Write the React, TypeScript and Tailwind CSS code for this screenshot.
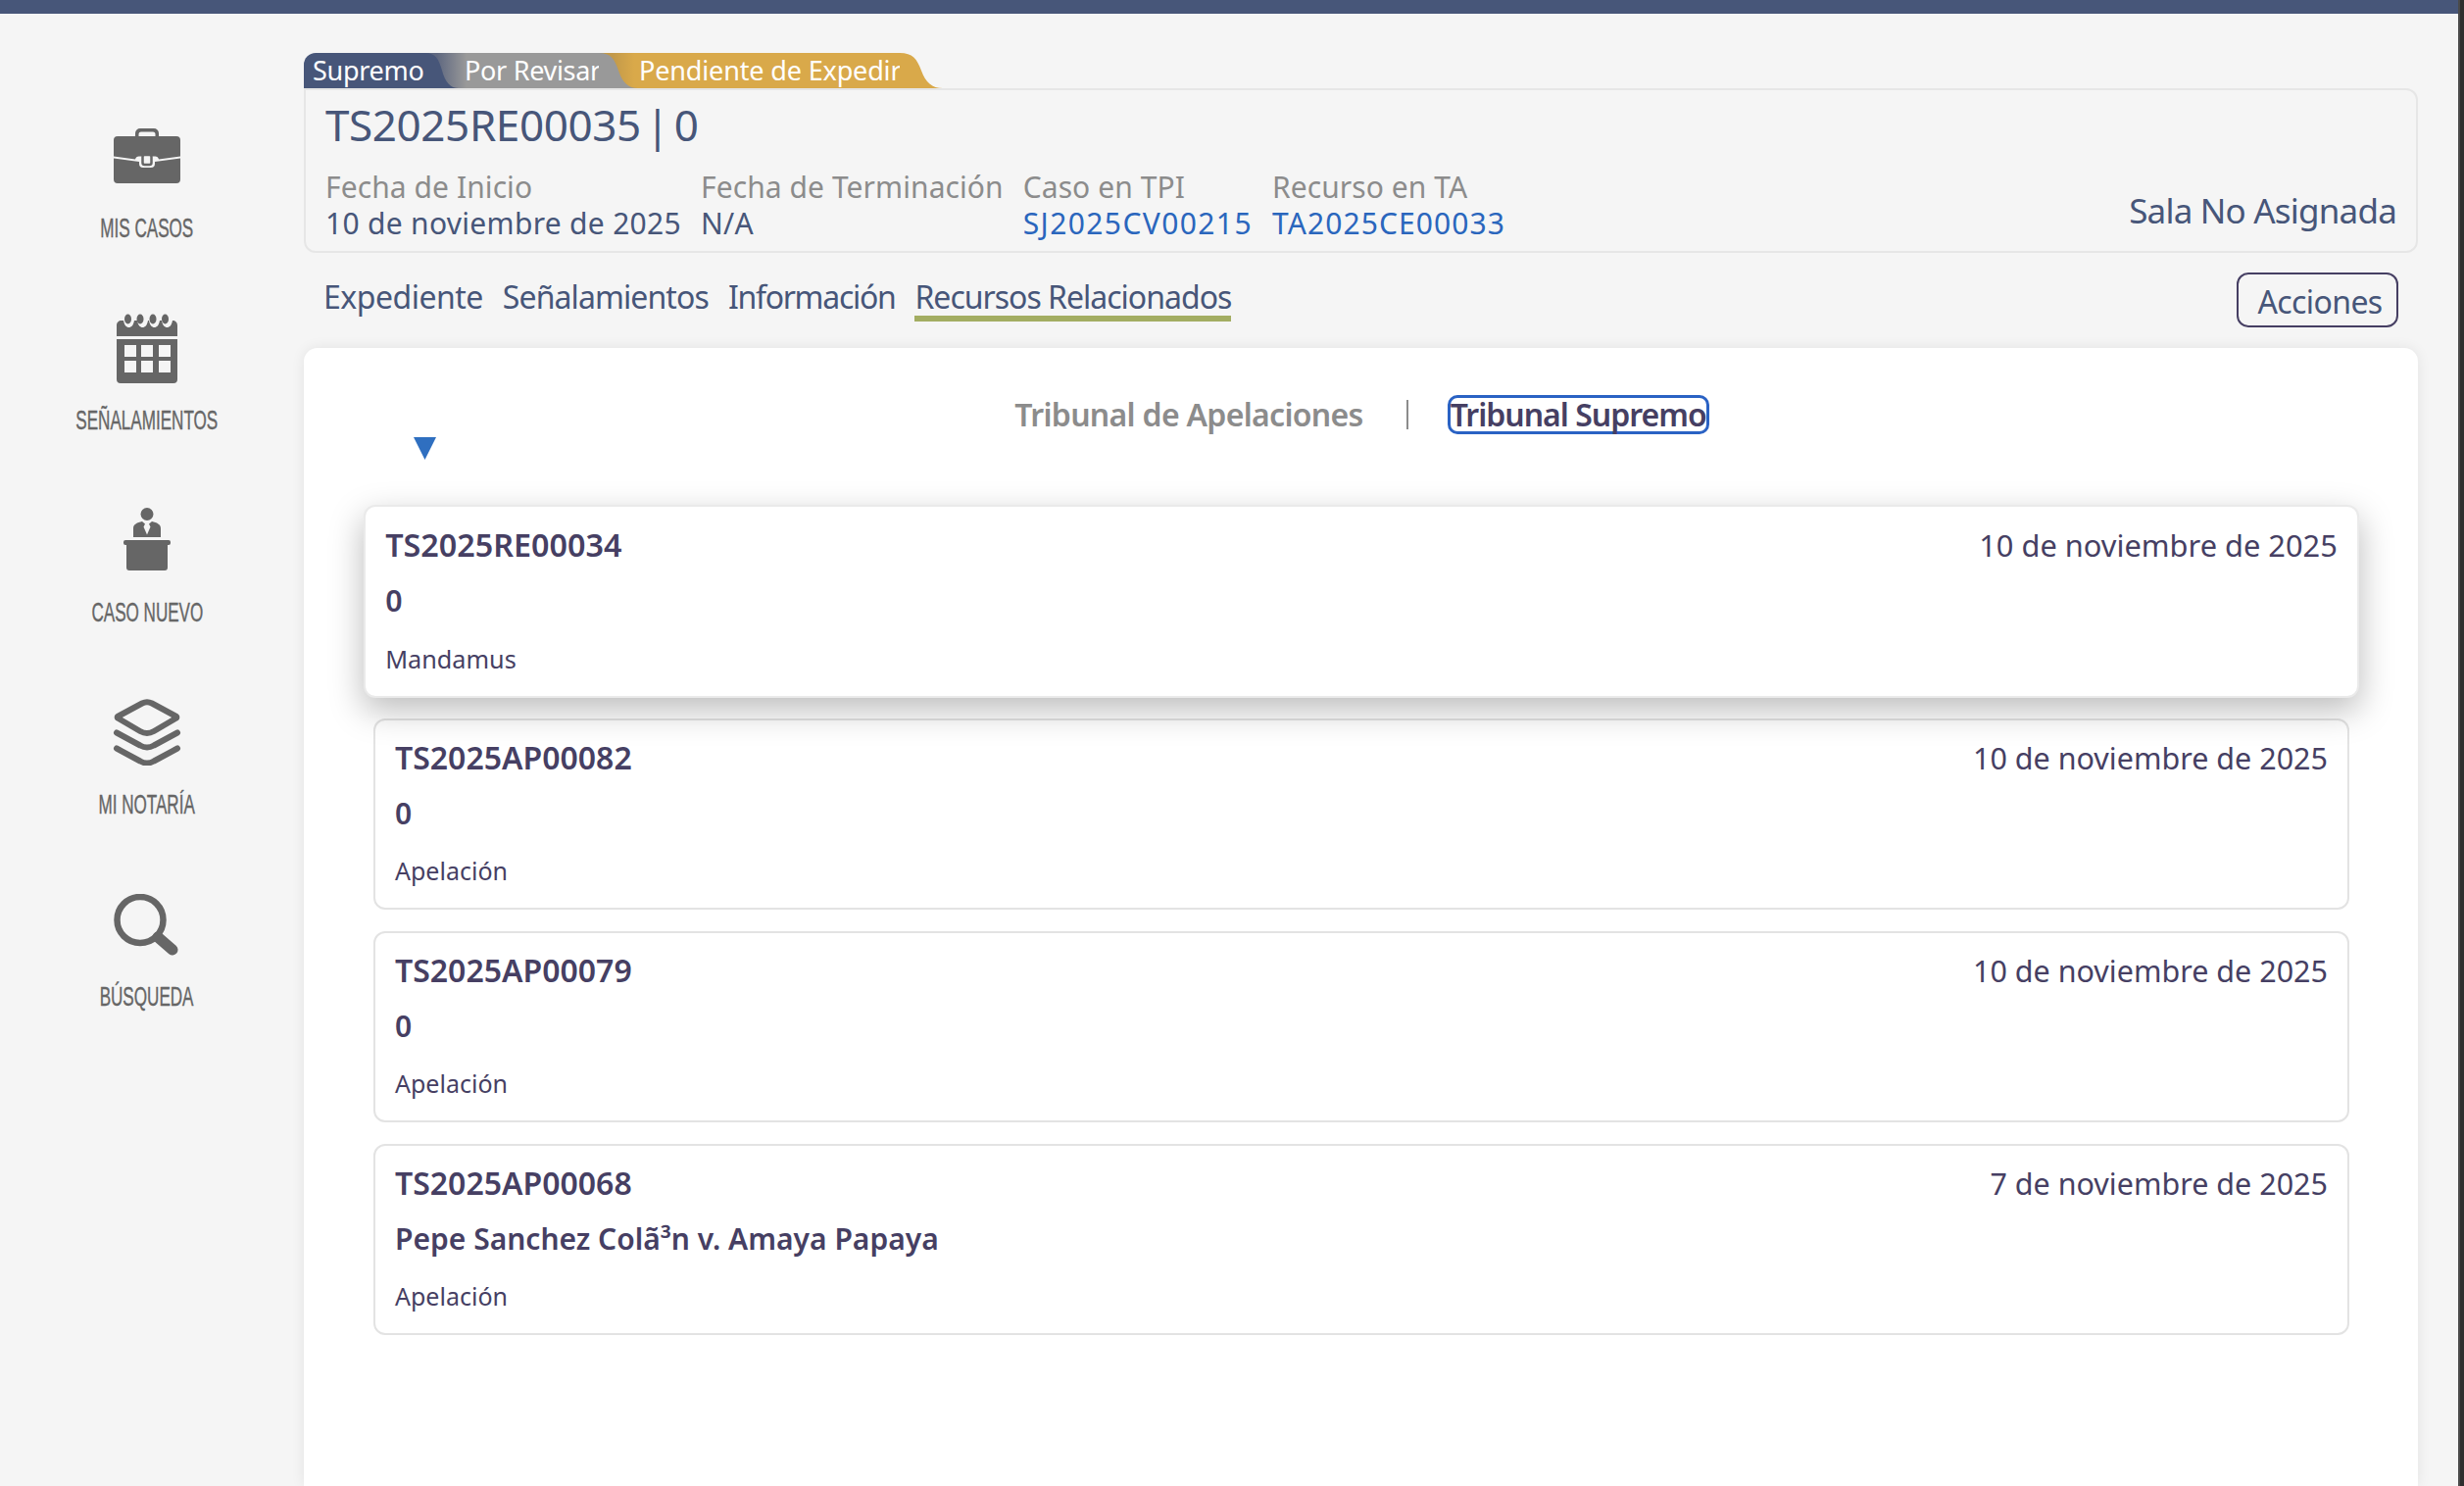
const sans = "font-['Noto_Sans',sans-serif]";

function IconBriefcase() {
  return (
    <svg className="block" width="70" height="58" viewBox="0 0 70 58" fill="#666666">
      <path d="M23 10V6a5 5 0 0 1 5-5h14a5 5 0 0 1 5 5v4h-3.500V7a2.500 2.500 0 0 0-2.500-2.500H29A2.500 2.500 0 0 0 26.500 7v3z" />
      <path d="M5 9h60a4 4 0 0 1 4 4v16.500l-22 3a4 4 0 0 0-4-3h-16a4 4 0 0 0-4 3l-22-3V13a4 4 0 0 1 4-4z" />
      <path d="M1 31.500l26 3.500v2a4 4 0 0 0 4 4h8a4 4 0 0 0 4-4v-2l26-3.500V53a4 4 0 0 1-4 4H5a4 4 0 0 1-4-4z" />
      <rect x="30.500" y="28" width="9" height="10" rx="2" fill="#f5f5f5" stroke="#666666" strokeWidth="2.500" />
    </svg>
  );
}

function IconCalendar() {
  return (
    <svg className="block" width="64" height="72" viewBox="0 0 64 72" fill="#666666">
      <path d="M1 12c0-3 2-5 5-5h2c1 5 3 7 5.500 7S18 12 19 7h3c1 5 3 7 5.500 7S32 12 33 7h1c1 5 3 7 5.500 7S44 12 45 7h2c1 5 3 7 5.500 7S57 12 58 7c3 0 5 2 5 5v11H1z" />
      <ellipse cx="12.500" cy="5.500" rx="3.500" ry="5" />
      <ellipse cx="25" cy="5.500" rx="3.500" ry="5" />
      <ellipse cx="38" cy="5.500" rx="3.500" ry="5" />
      <ellipse cx="50.500" cy="5.500" rx="3.500" ry="5" />
      <path
        fillRule="evenodd"
        d="M1 26h62v41a4 4 0 0 1-4 4H5a4 4 0 0 1-4-4zM9 32v12h12V32zM26 32v12h12V32zM44 32v12h12V32zM9 48v12h12V48zM26 48v12h12V48zM44 48v12h12V48z"
      />
    </svg>
  );
}

function IconPodium() {
  return (
    <svg className="block" width="50" height="65" viewBox="0 0 50 65" fill="#666666">
      <circle cx="25" cy="6.500" r="6.500" />
      <path d="M11 30V21c0-4 4-6 9-7l3 2.500-1.500 3 3.500 8 3.500-8-1.500-3 3-2.500c5 1 9 3 9 7v9z" />
      <rect x="1" y="33" width="48" height="5" rx="2" />
      <path d="M4 38h42v23a3 3 0 0 1-3 3H7a3 3 0 0 1-3-3z" />
    </svg>
  );
}

function IconLayers() {
  return (
    <svg className="block" width="70" height="68" viewBox="0 0 70 68" fill="none" stroke="#666666" strokeWidth="6" strokeLinecap="round" strokeLinejoin="round">
      <path d="M30 4.500a11 11 0 0 1 10 0L65 18a1 1 0 0 1 0 1.500L42 33a14 14 0 0 1-14 0L5 19.500A1 1 0 0 1 5 18z" />
      <path d="M4 34.500l24 13a14 14 0 0 0 14 0L66 34.500" />
      <path d="M4 50.500l24 13a14 14 0 0 0 14 0L66 50.500" />
    </svg>
  );
}

function IconSearch() {
  return (
    <svg className="block" width="70" height="63" viewBox="0 0 70 63" fill="none" stroke="#666666" strokeLinecap="round">
      <circle cx="28" cy="26.500" r="23.500" strokeWidth="6.500" />
      <path d="M46 44l15 13" strokeWidth="11" />
    </svg>
  );
}

function TabTail({ fill, width }: { fill: string; width: number }) {
  return (
    <svg className="block shrink-0" width={width} height="36" viewBox="0 0 40 36" preserveAspectRatio="none" fill={fill}>
      <path d="M0 0C12 0 16 6 20 18C24 30 30 36 40 36H0Z" />
    </svg>
  );
}

const navItems = [
  { label: "MIS CASOS", icon: <IconBriefcase />, box: "pt-[15px]" },
  { label: "SEÑALAMIENTOS", icon: <IconCalendar />, box: "pt-[9px]" },
  { label: "CASO NUEVO", icon: <IconPodium />, box: "pt-[11px]" },
  { label: "MI NOTARÍA", icon: <IconLayers />, box: "pt-[10px]" },
  { label: "BÚSQUEDA", icon: <IconSearch />, box: "pt-[13px]" },
];

const meta = [
  { label: "Fecha de Inicio", value: "10 de noviembre de 2025", cls: "text-[#475679] tracking-[0.3px]" },
  { label: "Fecha de Terminación", value: "N/A", cls: "text-[#475679] tracking-[0.3px]" },
  { label: "Caso en TPI", value: "SJ2025CV00215", cls: "text-[#2a66bd] tracking-[1.4px]" },
  { label: "Recurso en TA", value: "TA2025CE00033", cls: "text-[#2a66bd] tracking-[1.1px]" },
];

const tabs = [
  { label: "Expediente", cls: "tracking-[-0.5px]" },
  { label: "Señalamientos", cls: "tracking-[-0.9px]" },
  { label: "Información", cls: "tracking-[-1.3px]" },
  { label: "Recursos Relacionados", cls: "tracking-[-1px] border-b-[6px] border-[#a3ad62]" },
];

const cases = [
  { id: "TS2025RE00034", title: "0", kind: "Mandamus", date: "10 de noviembre de 2025" },
  { id: "TS2025AP00082", title: "0", kind: "Apelación", date: "10 de noviembre de 2025" },
  { id: "TS2025AP00079", title: "0", kind: "Apelación", date: "10 de noviembre de 2025" },
  { id: "TS2025AP00068", title: "Pepe Sanchez Colã³n v. Amaya Papaya", kind: "Apelación", date: "7 de noviembre de 2025" },
];

export default function App() {
  return (
    <div className={`${sans} h-[1516px] overflow-hidden flex`}>
      <div className="w-[2508px] shrink-0 bg-[#f5f5f5] flex flex-col">
        <div className="h-[14px] shrink-0 bg-[#475679]" />

        <div className="flex flex-1 min-h-0">
          {/* Sidebar */}
          <aside className="w-[310px] shrink-0 flex flex-col items-center pt-[101px] pr-[10px]">
            {navItems.map((item) => (
              <div key={item.label} className="h-[196px] flex flex-col items-center">
                <div className={`h-[102px] ${item.box}`}>{item.icon}</div>
                <span className="font-['Liberation_Sans',sans-serif] text-[28px] leading-[32px] text-[#666666] whitespace-nowrap scale-x-[0.61] [-webkit-text-stroke:0.4px_#666666]">
                  {item.label}
                </span>
              </div>
            ))}
          </aside>

          {/* Main */}
          <main className="w-[2157px] shrink-0 pt-[40px] flex flex-col">
            <div className="flex h-[36px] text-[27px] leading-[36px] text-white whitespace-nowrap">
              <div className="relative z-[3] flex">
                <div className="w-[124px] pl-[9px] rounded-tl-[12px] bg-[#475679] tracking-[-0.3px]">Supremo</div>
                <TabTail fill="#475679" width={34} />
              </div>
              <div className="relative z-[2] flex -ml-[40px]">
                <div className="w-[183px] pl-[46px] bg-[linear-gradient(90deg,#5f6880_18px,#999999_48px)] tracking-[-0.3px]">Por Revisar</div>
                <TabTail fill="#999999" width={40} />
              </div>
              <div className="relative z-[1] flex -ml-[40px]">
                <div className="w-[307px] pl-[41px] bg-[linear-gradient(90deg,#c2994a_14px,#d9a94a_36px)] tracking-[-0.15px]">Pendiente de Expedir</div>
                <TabTail fill="#d9a94a" width={44} />
              </div>
            </div>

            <div className="h-[168px] shrink-0 rounded-b-[12px] rounded-tr-[12px] border-2 border-[#e6e6e6] px-[20px] pt-[5px] flex justify-between">
              <div>
                <div className="text-[44px] leading-[60px] text-[#475679] tracking-[-0.4px] [word-spacing:-6px]">TS2025RE00035 | 0</div>
                <div className="flex gap-[20px] mt-[15px] text-[30px] leading-[37px]">
                  {meta.map((m) => (
                    <div key={m.label}>
                      <div className="text-[#8c8c8c] tracking-[0.08px]">{m.label}</div>
                      <div className={m.cls}>{m.value}</div>
                    </div>
                  ))}
                </div>
              </div>
              <div className="self-end pb-[18px] text-[35px] leading-[46px] text-[#475679] tracking-[-0.8px]">Sala No Asignada</div>
            </div>

            <div className="flex items-start justify-between mt-[20px] px-[20px]">
              <nav className="flex gap-[20px] mt-[3px] text-[32px] leading-[44px] text-[#475679]">
                {tabs.map((t) => (
                  <span key={t.label} className={`h-[47px] ${t.cls}`}>{t.label}</span>
                ))}
              </nav>
              <button className="h-[56px] w-[165px] rounded-[12px] border-2 border-[#463f63] pt-[4px] pl-[5px] text-[32px] text-[#475679] tracking-[-0.6px]">Acciones</button>
            </div>

            {/* Panel */}
            <section className="mt-[21px] flex-1 bg-white rounded-t-[14px] shadow-[0_0_14px_rgba(0,0,0,0.08)] pl-[71px] pr-[70px] text-[#463f63] relative">
              <div className="flex items-center justify-center gap-[41px] pt-[25px] pl-[1px] h-[111px] text-[32px] font-semibold tracking-[-0.7px]">
                <span className="text-[#8c8c8c]">Tribunal de Apelaciones</span>
                <span className="w-[2px] h-[30px] ml-[3px] -mr-[1px] bg-[#8c8c8c]" />
                <span className="rounded-[10px] border-[3px] border-[#2a62c4] leading-[34px] tracking-[-1px]">Tribunal Supremo</span>
              </div>
              <svg className="absolute left-[112px] top-[91px]" width="23" height="23" viewBox="0 0 23 23" fill="#2f6fc0">
                <path d="M0 0h23L11.500 23z" />
              </svg>

              <div className="flex flex-col gap-[22px] mt-[50px]">
                {cases.map((c, i) => (
                  <div
                    key={c.id}
                    className={`h-[195px] rounded-[12px] border-2 px-[20px] pt-[18px] ${
                      i === 0
                        ? "relative bg-white border-[#eaeaea] scale-[1.01] shadow-[0_12px_34px_rgba(0,0,0,0.26)]"
                        : "border-[#e3e3e3]"
                    }`}
                  >
                    <div className="flex justify-between items-start">
                      <span className="text-[32px] leading-[40px] font-semibold">{c.id}</span>
                      <span className="text-[30.500px] leading-[40px]">{c.date}</span>
                    </div>
                    <div className="text-[30px] leading-[40px] font-semibold mt-[17px]">{c.title}</div>
                    <div className="text-[25px] leading-[34px] mt-[21px]">{c.kind}</div>
                  </div>
                ))}
              </div>
            </section>
          </main>
        </div>
      </div>
      <div className="flex-1 bg-[#2e2e2e] border-l-2 border-[#4a4a4a]" />
    </div>
  );
}
